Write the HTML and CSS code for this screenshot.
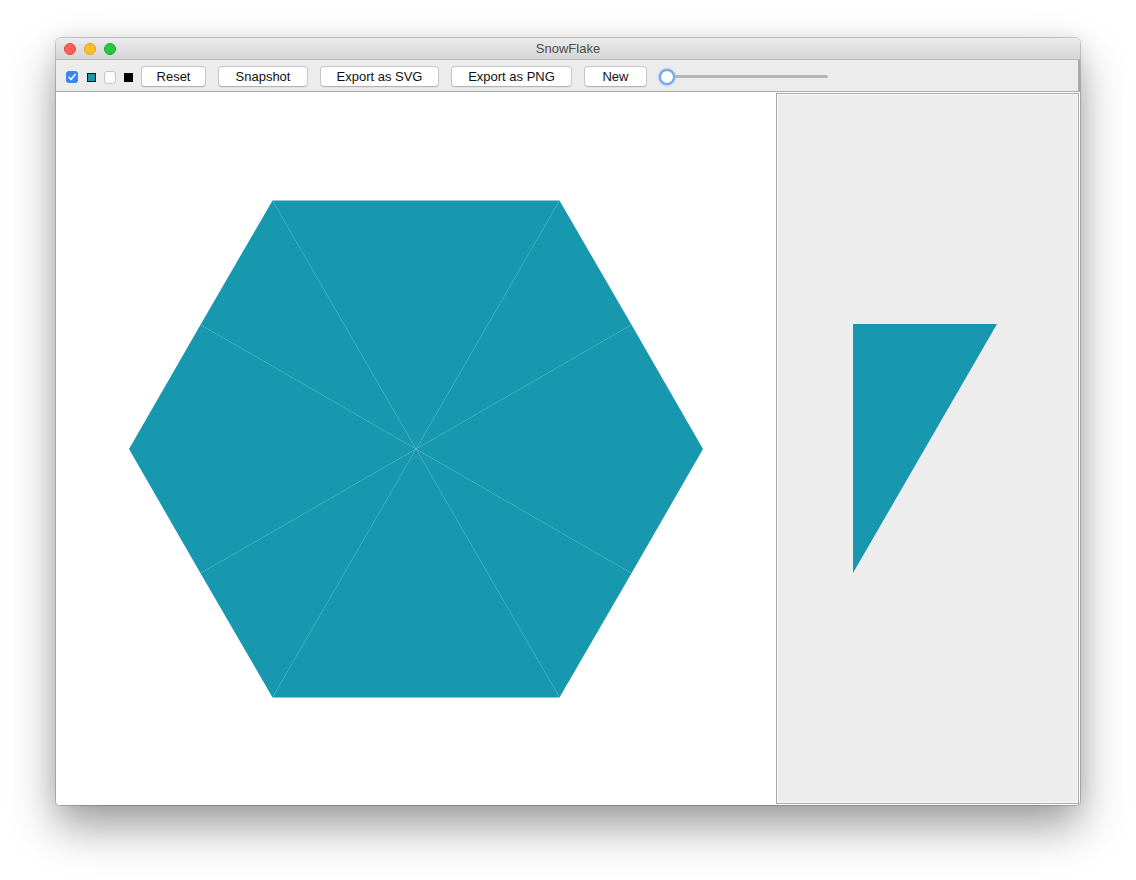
FILE: index.html
```html
<!DOCTYPE html>
<html>
<head>
<meta charset="utf-8">
<link rel="stylesheet" href="styles.css">
</head>
<body>
<div class="window">
  <div class="titlebar">
    <div class="lights">
      <span class="light red"></span>
      <span class="light yellow"></span>
      <span class="light green"></span>
    </div>
    <div class="title">SnowFlake</div>
  </div>
  <div class="toolbar">
    <span class="check">
      <svg width="12" height="12" viewBox="0 0 12 12"><path d="M3 6.3 L5.1 8.5 L9.2 3.4" fill="none" stroke="#fff" stroke-width="1.5" stroke-linecap="round" stroke-linejoin="round"/></svg>
    </span>
    <span class="swatch teal"></span>
    <span class="swatch white"></span>
    <span class="swatch black"></span>
    <button class="btn w-reset">Reset</button>
    <button class="btn w-snap">Snapshot</button>
    <button class="btn w-svg">Export as SVG</button>
    <button class="btn w-png">Export as PNG</button>
    <button class="btn w-new">New</button>
    <div class="slider">
      <span class="thumb"></span>
      <span class="track"></span>
    </div>
  </div>
  <div class="content">
    <div class="canvas">
      <svg width="720" height="713" viewBox="0 0 720 713">
        <g fill="#1898ae">
          <polygon points="360,357 647,357 575.5,232.7"/>
          <polygon points="360,357 575.5,232.7 503.5,108.5"/>
          <polygon points="360,357 503.5,108.5 360,108.5"/>
          <polygon points="360,357 360,108.5 216.5,108.5"/>
          <polygon points="360,357 216.5,108.5 144.5,232.7"/>
          <polygon points="360,357 144.5,232.7 73,357"/>
          <polygon points="360,357 73,357 144.5,481.3"/>
          <polygon points="360,357 144.5,481.3 216.5,605.5"/>
          <polygon points="360,357 216.5,605.5 360,605.5"/>
          <polygon points="360,357 360,605.5 503.5,605.5"/>
          <polygon points="360,357 503.5,605.5 575.5,481.3"/>
          <polygon points="360,357 575.5,481.3 647,357"/>
        </g>
      </svg>
    </div>
    <div class="panel">
      <svg width="301" height="709" viewBox="0 0 301 709">
        <polygon points="76,230 220,230 76,479" fill="#1898ae"/>
      </svg>
    </div>
  </div>
</div>
</body>
</html>
```
FILE: styles.css
```css
html, body {
  margin: 0;
  padding: 0;
  background: #ffffff;
}
body {
  width: 1136px;
  height: 880px;
  padding-top: 38px;
  padding-left: 56px;
  box-sizing: border-box;
  font-family: "Liberation Sans", Arial, sans-serif;
}
.window {
  width: 1024px;
  height: 767px;
  border-radius: 5px 5px 4px 4px;
  background: #ffffff;
  box-shadow: 0 0 0 1px rgba(0,0,0,0.18), 0 22px 45px rgba(0,0,0,0.38), 0 0 20px rgba(0,0,0,0.08);
  display: flex;
  flex-direction: column;
  overflow: hidden;
}
.titlebar {
  height: 22px;
  flex: none;
  background: linear-gradient(#ebebeb, #d5d5d5);
  border-bottom: 1px solid #b9b9b9;
  display: flex;
  align-items: center;
  position: relative;
  box-sizing: border-box;
}
.lights {
  display: flex;
  gap: 8px;
  padding-left: 8px;
}
.light {
  width: 12px;
  height: 12px;
  border-radius: 50%;
  box-sizing: border-box;
}
.red { background: #fe5f57; border: 0.5px solid #e2463f; }
.yellow { background: #febc2e; border: 0.5px solid #e1a116; }
.green { background: #28c840; border: 0.5px solid #12ac28; }
.title {
  position: absolute;
  left: 0;
  right: 0;
  top: 0;
  line-height: 22px;
  text-align: center;
  font-size: 13px;
  color: #4c4c4c;
  pointer-events: none;
}
.toolbar {
  height: 32px;
  flex: none;
  background: #ececec;
  border-bottom: 1px solid #a9a9a9;
  border-right: 2px solid #a9a9a9;
  box-sizing: border-box;
  display: flex;
  align-items: center;
  padding-left: 10px;
  padding-top: 1px;
}
.check {
  width: 12px;
  height: 12px;
  border-radius: 3px;
  background: #3a86f6;
  display: flex;
  margin-top: 2px;
}
.swatch {
  box-sizing: border-box;
  margin-top: 2px;
}
.teal {
  width: 9px;
  height: 9px;
  background: #1898ae;
  border: 1px solid #111;
  margin-left: 9px;
}
.white {
  width: 12px;
  height: 13px;
  background: #fff;
  border: 1px solid #c4c4c4;
  border-radius: 3px;
  margin-left: 8px;
}
.black {
  width: 9px;
  height: 9px;
  background: #000;
  margin-left: 8px;
}
.btn {
  height: 21px;
  margin-left: 12px;
  padding: 0;
  border: 1px solid #c6c6c6;
  border-bottom-color: #b4b4b4;
  border-radius: 4px;
  background: #ffffff;
  font-family: "Liberation Sans", Arial, sans-serif;
  font-size: 13px;
  color: #111;
  box-shadow: 0 0.5px 0.5px rgba(0,0,0,0.08);
  margin-top: 1px;
}
.w-reset { width: 65px; margin-left: 8px; }
.w-snap { width: 90px; }
.w-svg { width: 119px; }
.w-png { width: 121px; }
.w-new { width: 63px; }
.slider {
  display: flex;
  align-items: center;
  margin-left: 12px;
  margin-top: 1px;
}
.thumb {
  width: 16px;
  height: 16px;
  box-sizing: border-box;
  border-radius: 50%;
  background: #ffffff;
  border: 2px solid #6fa6f0;
  box-shadow: 0 0 1.5px 1px rgba(120,170,240,0.45);
  flex: none;
  position: relative;
  z-index: 1;
}
.track {
  width: 153px;
  height: 3px;
  border-radius: 2px;
  background: #b5b5b5;
}
.content {
  flex: 1;
  display: flex;
  min-height: 0;
}
.canvas {
  width: 720px;
  flex: none;
  background: #ffffff;
}
.canvas svg { display: block; }
.panel {
  flex: 1;
  margin: 1px 1px 1px 0;
  background: #ededed;
  border: 1px solid #a8a8a8;
  box-shadow: inset 0 0 0 1px #f8f8f8;
}
.panel svg { display: block; }
```
